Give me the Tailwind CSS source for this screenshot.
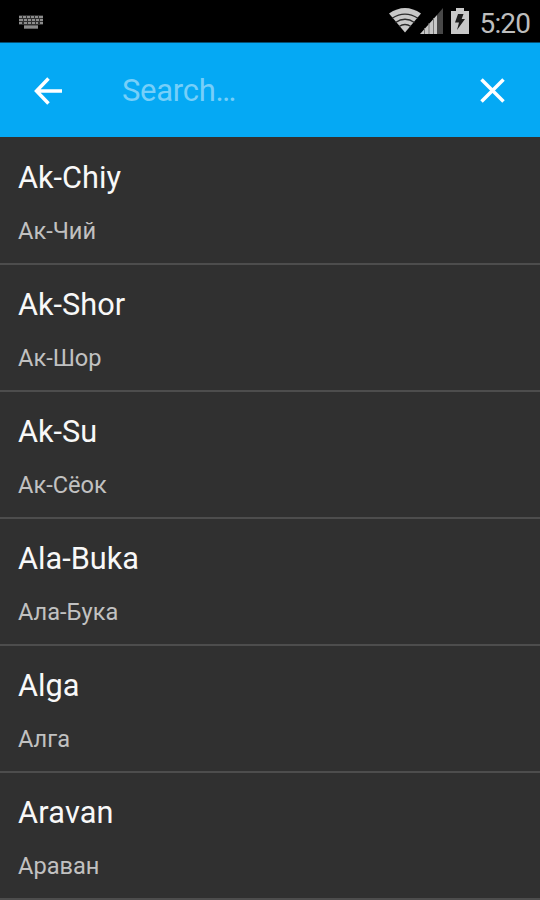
<!DOCTYPE html>
<html lang="en">
<head>
    <meta charset="UTF-8">
    <meta name="viewport" content="width=device-width, initial-scale=1.0">
    <title>Search</title>
    <script src="https://cdn.jsdelivr.net/npm/@tailwindcss/browser@4"></script>
</head>
<body class="bg-[#303030] font-['Roboto',sans-serif] h-[900px] overflow-hidden">

    <!-- Status bar -->
    <div class="flex items-center justify-between h-[42px] bg-black pl-[18px] pr-[10px]">
        <svg class="w-[26px] h-[14px] mt-[2px]" viewBox="0 0 26 14" fill="#8c8c8c">
            <path d="M1 0h24v10h-5v4H6v-4H1z" fill="#303030"/>
            <path d="M1 1h3v2H1zM5 1h3v2H5zM9 1h3v2H9zM13 1h3v2h-3zM17 1h3v2h-3zM21 1h4v2h-4zM1 4h4v2H1zM6 4h3v2H6zM10 4h3v2h-3zM14 4h3v2h-3zM18 4h3v2h-3zM22 4h3v2h-3zM1 7h3v2H1zM6 7h3v2H6zM10 7h3v2h-3zM14 7h3v2h-3zM18 7h2v2h-2zM22 7h3v2h-3zM6 10.500h14v3H6z"/>
        </svg>
        <div class="flex items-center">
            <svg class="w-[32px] h-[26px]" viewBox="0 0 32 26">
                <path d="M0 5.500Q16-5.500 32 5.500L16 24.500z" fill="#c8c8c8"/>
                <path d="M3 10.300Q16 1.800 29 10.300M6.500 14.500Q16 8 25.500 14.500M10 18.500Q16 14.500 22 18.500" fill="none" stroke="#2b2b2b" stroke-width="1.300"/>
            </svg>
            <svg class="w-[23px] h-[26px] -ml-[1px]" viewBox="0 0 23 26">
                <path d="M0 26L17 7v19z" fill="#c8c8c8"/>
                <path d="M17 7l6-7v26h-6z" fill="#484848"/>
                <path d="M4.500 20v6M9 15v11M13.500 10v16" stroke="#777" stroke-width="1"/>
            </svg>
            <svg class="w-[18px] h-[26px] ml-[8px]" viewBox="0 0 18 26">
                <path d="M5 0h8v3h5v23H0V3h5z" fill="#c8c8c8"/>
                <path d="M7 6h5.500l-1.800 5H14L6 22l2-7.500H4z" fill="#1c1c1c"/>
            </svg>
            <span class="ml-[11px] mt-[5px] text-[28px] leading-[32px] tracking-[-0.9px] text-[#bdbdbd]">5:20</span>
        </div>
    </div>

    <!-- Search toolbar -->
    <header class="flex items-center h-[95px] bg-[#05a9f4] border-t border-[#054f72] pt-px pl-[33px] pr-[35px]">
        <svg class="w-[30px] h-[28px]" viewBox="0 0 30 28" fill="none" stroke="#fff" stroke-width="3.500">
            <path d="M15.500 1.500L3.500 14 15.500 26.500M3 14h26"/>
        </svg>
        <div class="flex-1 ml-[59px] text-[31px] leading-[36px] tracking-[-0.3px] text-[#76cff9]">Search…</div>
        <svg class="w-[25px] h-[25px]" viewBox="0 0 25 25" fill="none" stroke="#fff" stroke-width="3.500">
            <path d="M1.500 1.500l22 22M23.500 1.500l-22 22"/>
        </svg>
    </header>

    <!-- City list -->
    <ul>
        <li class="h-[128px] px-[18px] pt-[23px] border-b-2 border-[#4d4d4d]">
            <div class="text-[30.7px] leading-[36px] text-[#f8f8f8]">Ak-Chiy</div>
            <div class="mt-[21px] text-[23.6px] leading-[28px] text-[#c1c1c1]">Ак-Чий</div>
        </li>
        <li class="h-[127px] px-[18px] pt-[22px] border-b-2 border-[#4d4d4d]">
            <div class="text-[30.7px] leading-[36px] text-[#f8f8f8]">Ak-Shor</div>
            <div class="mt-[21px] text-[23.6px] leading-[28px] text-[#c1c1c1]">Ак-Шор</div>
        </li>
        <li class="h-[127px] px-[18px] pt-[22px] border-b-2 border-[#4d4d4d]">
            <div class="text-[30.7px] leading-[36px] text-[#f8f8f8]">Ak-Su</div>
            <div class="mt-[21px] text-[23.6px] leading-[28px] text-[#c1c1c1]">Ак-Сёок</div>
        </li>
        <li class="h-[127px] px-[18px] pt-[22px] border-b-2 border-[#4d4d4d]">
            <div class="text-[30.7px] leading-[36px] text-[#f8f8f8]">Ala-Buka</div>
            <div class="mt-[21px] text-[23.6px] leading-[28px] text-[#c1c1c1]">Ала-Бука</div>
        </li>
        <li class="h-[127px] px-[18px] pt-[22px] border-b-2 border-[#4d4d4d]">
            <div class="text-[30.7px] leading-[36px] text-[#f8f8f8]">Alga</div>
            <div class="mt-[21px] text-[23.6px] leading-[28px] text-[#c1c1c1]">Алга</div>
        </li>
        <li class="h-[127px] px-[18px] pt-[22px] border-b-2 border-[#4d4d4d]">
            <div class="text-[30.7px] leading-[36px] tracking-[0.2px] text-[#f8f8f8]">Aravan</div>
            <div class="mt-[21px] text-[23.6px] leading-[28px] text-[#c1c1c1]">Араван</div>
        </li>
    </ul>

</body>
</html>
